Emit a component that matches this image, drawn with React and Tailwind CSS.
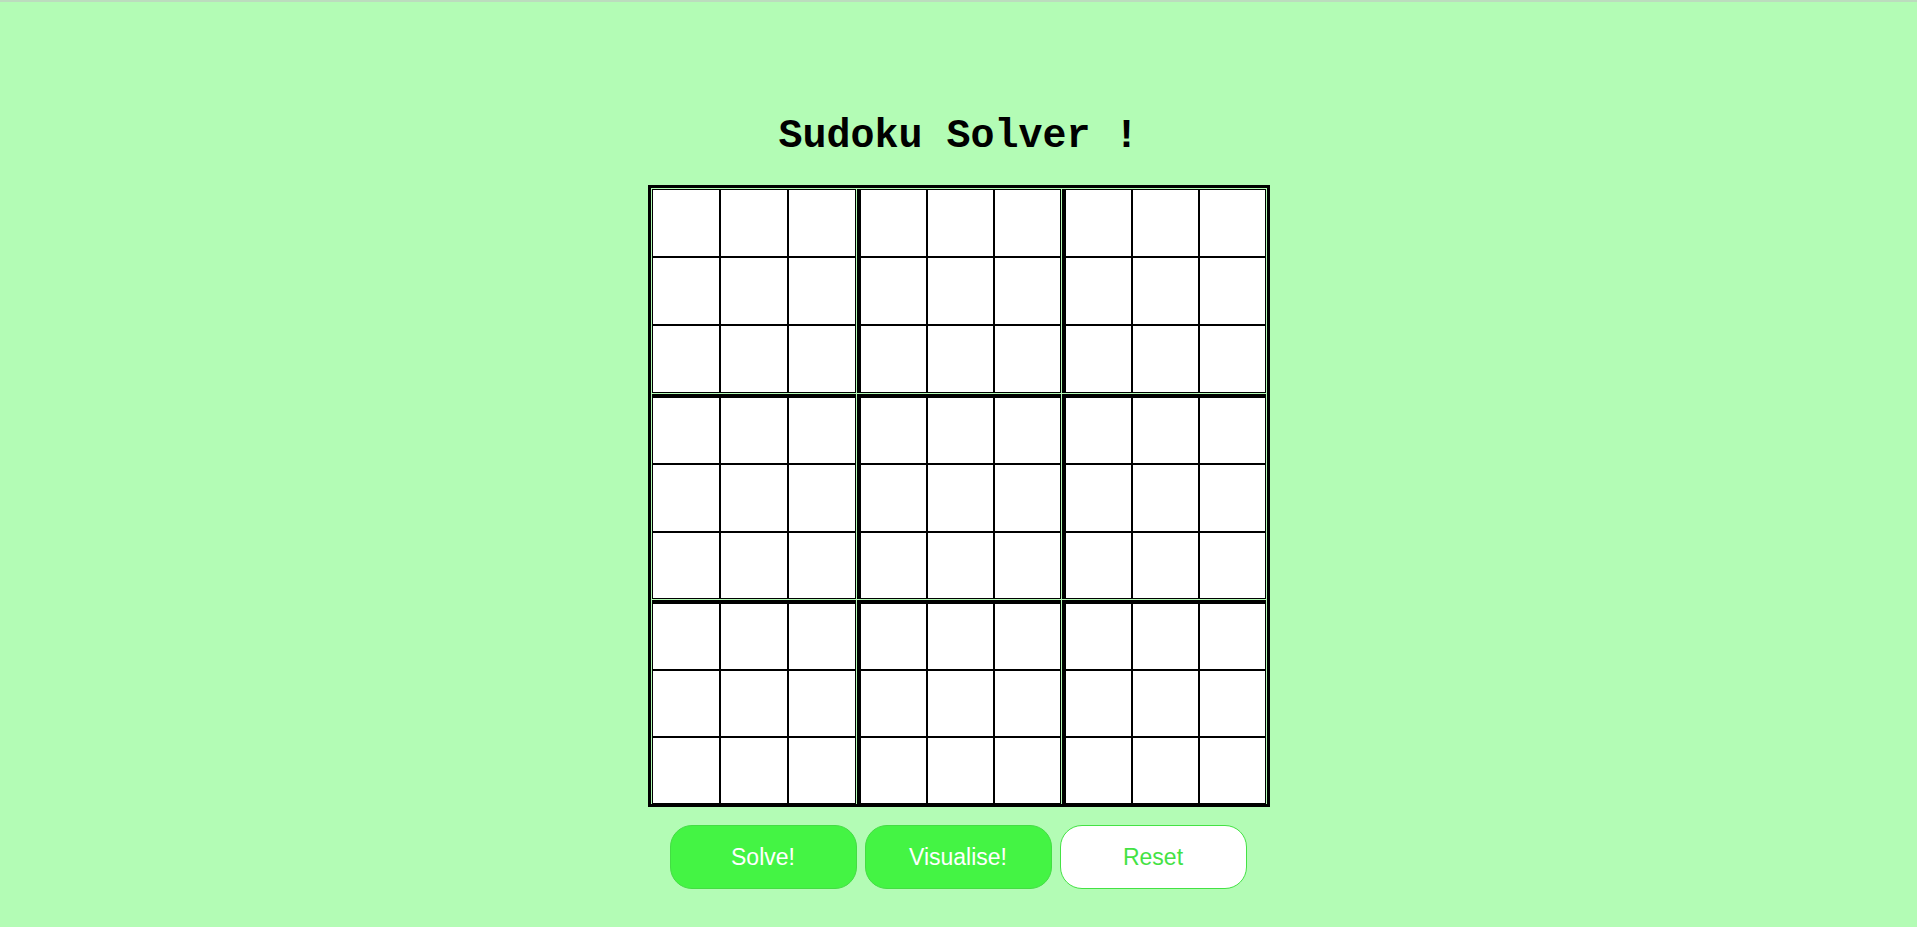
import React from "react";

const boxPad = [
  ["pl-px pt-px", "pl-[4px] pt-px", "pl-[4px] pt-px"],
  ["pl-px pt-[4px]", "pl-[4px] pt-[4px]", "pl-[4px] pt-[4px]"],
  ["pl-px pt-[4px]", "pl-[4px] pt-[4px]", "pl-[4px] pt-[4px]"],
];

function Box({ pad }) {
  return (
    <div className={`ml-px mt-px bg-black pr-px pb-px ${pad}`}>
      <div className="grid h-full w-full grid-cols-3 grid-rows-3 gap-[2px]">
        {Array.from({ length: 9 }).map((_, i) => (
          <div key={i} className="bg-white" />
        ))}
      </div>
    </div>
  );
}

export default function App() {
  return (
    <div className="min-h-[927px] w-full border-t-2 border-[#bcdcbe] bg-[#b3fcb5]">
      <div className="flex flex-col items-center pt-[111px]">
        <h1
          className="text-[40px] font-bold leading-[48px] text-black"
          style={{ fontFamily: '"Liberation Mono", "Courier New", monospace' }}
        >
          Sudoku Solver !
        </h1>
        <div className="mt-[24px] grid h-[622px] w-[622px] grid-cols-3 grid-rows-3 border-[3px] border-black">
          {boxPad.map((row, r) =>
            row.map((p, c) => <Box key={`${r}-${c}`} pad={p} />)
          )}
        </div>
        <div
          className="mt-[18px] flex w-[622px] shrink-0 gap-[8px] pl-[22px]"
          style={{ fontFamily: '"Liberation Sans", Arial, sans-serif' }}
        >
          <button className="h-[64px] w-[187px] shrink-0 rounded-[22px] border border-[#44dd44] bg-[#44f444] text-[23px] text-white">
            Solve!
          </button>
          <button className="h-[64px] w-[187px] shrink-0 rounded-[22px] border border-[#44dd44] bg-[#44f444] text-[23px] text-white">
            Visualise!
          </button>
          <button className="h-[64px] w-[187px] shrink-0 rounded-[22px] border border-[#44e244] bg-white text-[23px] text-[#44e244]">
            Reset
          </button>
        </div>
      </div>
    </div>
  );
}
